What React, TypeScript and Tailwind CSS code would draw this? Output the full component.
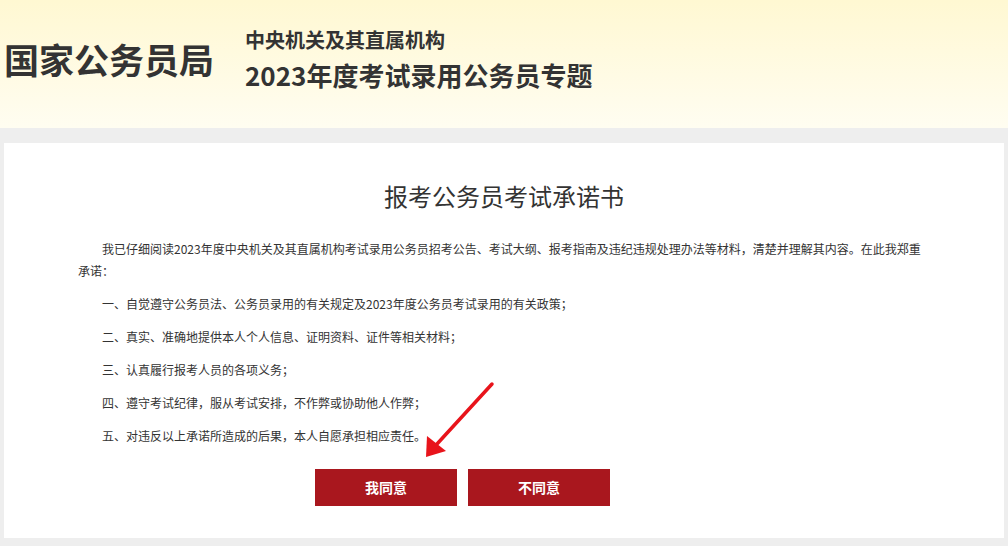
export default function App() {
  const items = [
    "一、自觉遵守公务员法、公务员录用的有关规定及2023年度公务员考试录用的有关政策；",
    "二、真实、准确地提供本人个人信息、证明资料、证件等相关材料；",
    "三、认真履行报考人员的各项义务；",
    "四、遵守考试纪律，服从考试安排，不作弊或协助他人作弊；",
    "五、对违反以上承诺所造成的后果，本人自愿承担相应责任。",
  ];

  return (
    <div
      className="relative w-[1008px] h-[546px] overflow-hidden bg-[#eeeeee] text-[#333333]"
      style={{ fontFamily: '"Noto Sans CJK SC", "Noto Sans", sans-serif' }}
    >
      {/* Header */}
      <div className="h-[128px] flex items-center pl-[4px] pb-[10px] bg-gradient-to-b from-[#fff8d2] to-[#fffdf1]">
        <div className="text-[35px] leading-[44px] font-bold text-[#333333]">国家公务员局</div>
        <div className="ml-[31px] flex flex-col gap-[6px] pt-[2px]">
          <div className="text-[20px] leading-[24px] font-bold text-[#333333]">中央机关及其直属机构</div>
          <div className="text-[26px] leading-[34px] font-bold text-[#333333]">2023年度考试录用公务员专题</div>
        </div>
      </div>

      {/* Card */}
      <div className="mt-[15px] mx-[4px] h-[395px] bg-white pt-[37px]">
        <h1 className="text-center text-[24px] leading-[32px] font-normal text-[#333333]">报考公务员考试承诺书</h1>

        <div className="mt-[26px] ml-[74px] w-[852px] text-[12px] leading-[22px] text-[#333333]">
          <p className="mb-[11px] indent-[24px]">
            我已仔细阅读2023年度中央机关及其直属机构考试录用公务员招考公告、考试大纲、报考指南及违纪违规处理办法等材料，清楚并理解其内容。在此我郑重承诺：
          </p>
          {items.map((t) => (
            <p key={t} className="mb-[11px] indent-[24px]">
              {t}
            </p>
          ))}
        </div>

        <div className="mt-[22px] ml-[311px] flex gap-[11px]">
          <button className="w-[142px] h-[37px] bg-[#a9171e] text-white text-[14px] font-bold">我同意</button>
          <button className="w-[142px] h-[37px] bg-[#a9171e] text-white text-[14px] font-bold">不同意</button>
        </div>
      </div>

      {/* Red arrow annotation */}
      <svg className="absolute left-0 top-0 pointer-events-none" width="1008" height="546" viewBox="0 0 1008 546">
        <line x1="492" y1="384" x2="437" y2="444" stroke="#e8141b" strokeWidth="3.5" strokeLinecap="round" />
        <polygon points="426,457 427,436 446,451" fill="#e8141b" />
      </svg>
    </div>
  );
}
